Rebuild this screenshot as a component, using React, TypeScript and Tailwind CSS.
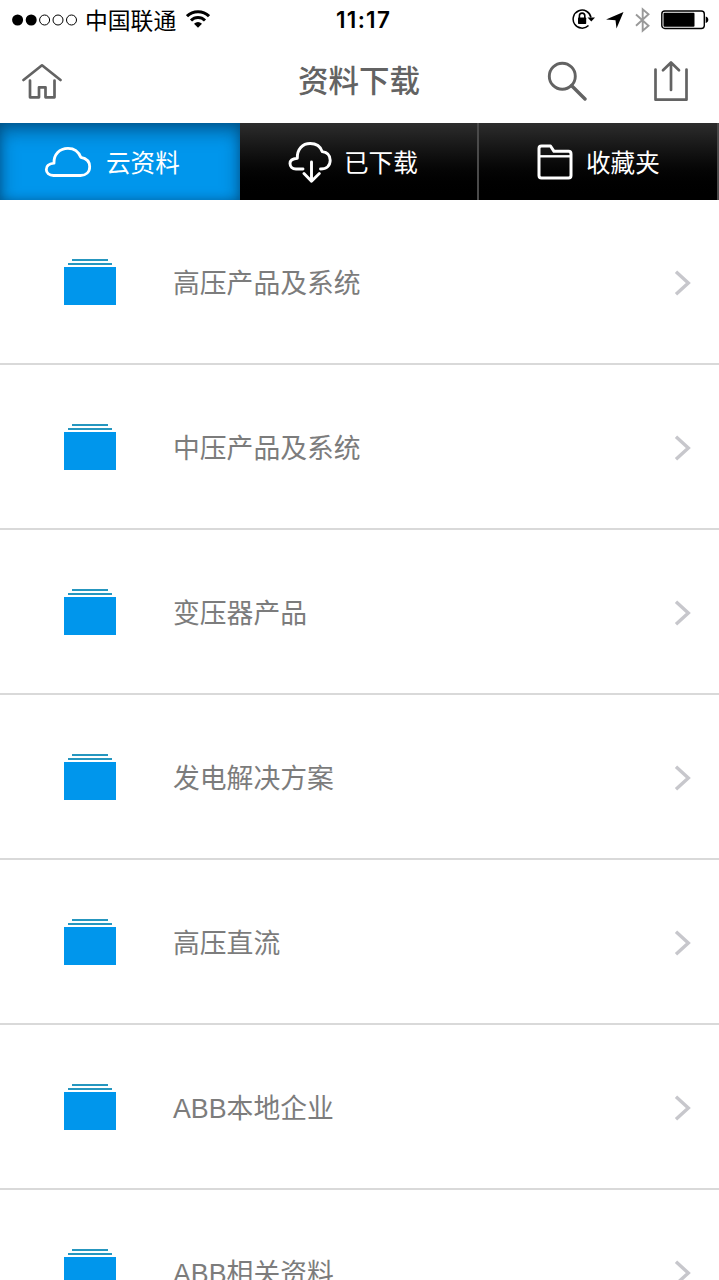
import type { ReactNode } from 'react';

interface Tab {
  label: string;
  icon: ReactNode;
  className: string;
}

const categories: string[] = [
  '高压产品及系统',
  '中压产品及系统',
  '变压器产品',
  '发电解决方案',
  '高压直流',
  'ABB本地企业',
  'ABB相关资料',
];

const tabs: Tab[] = [
  {
    label: '云资料',
    icon: <CloudIcon />,
    className:
      'w-[240px] pl-[44px] gap-[14px] bg-[#0096ec] shadow-[inset_0_8px_18px_rgba(0,40,70,0.5),inset_0_0_10px_rgba(0,50,90,0.35)]',
  },
  {
    label: '已下载',
    icon: <CloudDownloadIcon />,
    className:
      'w-[239px] pl-[48px] gap-[12px] bg-linear-to-b from-[#2d2d2d] to-black border-r-2 border-[#4a4a4a]',
  },
  {
    label: '收藏夹',
    icon: <FolderIcon />,
    className:
      'w-[240px] pl-[58px] gap-[13px] bg-linear-to-b from-[#2d2d2d] to-black border-r-2 border-[#4a4a4a]',
  },
];

function CloudIcon() {
  return (
    <svg width="48" height="32" viewBox="0 0 48 32" fill="none" stroke="white" strokeWidth="2.8" strokeLinejoin="round">
      <path d="M9.5 29.5C5 29.5 2.3 27 2.3 23.5C2.3 20 5 17.8 10 17.2C9.6 8.5 15.5 2.3 24 2.3C30.5 2.3 34.8 6 36.8 11.3C42.5 12.3 45.7 16 45.7 20.7C45.7 26 42 29.5 36.5 29.5Z" />
    </svg>
  );
}

function CloudDownloadIcon() {
  return (
    <svg width="44" height="42" viewBox="0 0 44 42" fill="none" stroke="white" strokeWidth="2.9" strokeLinecap="round" strokeLinejoin="round">
      <path d="M15 28H8C4.3 28 2 25.5 2 22.5C2 19.5 4.5 17.5 9.3 17.2C9 8 14.5 2.5 22.2 2.5C28.5 2.5 32.5 5.5 34.2 10.6C39.5 11.3 42.2 14.7 42.2 19.2C42.2 24.5 38.500 28 32.5 28" />
      <path d="M23.5 21V40M16 32.5L23.5 40.2L31.3 32.5" />
    </svg>
  );
}

function FolderIcon() {
  return (
    <svg width="36" height="36" viewBox="0 0 36 36" fill="none" stroke="white" strokeWidth="3" strokeLinejoin="round">
      <path d="M2 31.5V4.5Q2 2 4.5 2H13.5L17 7.3H31.5Q34 7.3 34 10V31.5Q34 34 31.5 34H4.5Q2 34 2 31.5Z" />
      <path d="M2 12.3H34" strokeWidth="2.4" />
    </svg>
  );
}

function StatusBar() {
  return (
    <div className="flex h-10 shrink-0 items-center text-black">
      <svg className="ml-3" width="66" height="12" viewBox="0 0 66 12" fill="none" stroke="black">
        <circle cx="5.6" cy="6" r="5.5" fill="black" stroke="none" />
        <circle cx="19.2" cy="6" r="5.5" fill="black" stroke="none" />
        <circle cx="32.6" cy="6" r="5" />
        <circle cx="46" cy="6" r="5" />
        <circle cx="59.5" cy="6" r="5" />
      </svg>
      <span className="ml-[7px] w-[94px] whitespace-nowrap pt-px text-[22.8px] leading-10">中国联通</span>
      <svg className="-mt-0.5 ml-[7px]" width="24" height="18" viewBox="0 0 24 18" fill="none" stroke="black" strokeWidth="3">
        <path d="M1 6.2C7 0.3 17 0.3 23 6.2" />
        <path d="M5 10.5C9 6.6 15 6.6 19 10.5" />
        <path d="M8 13.7Q12 10.5 16 13.7L12 17.7Z" fill="black" stroke="none" />
      </svg>
      <span className="ml-[126px] w-[56px] whitespace-nowrap font-['Inter',sans-serif] text-[22.5px] font-semibold tracking-[1.3px]">11:17</span>
      <svg className="-mt-0.5 ml-[180px]" width="23" height="20" viewBox="0 0 23 20" fill="none" stroke="black" strokeWidth="1.5">
        <path d="M19 8.5A9 9 0 1 0 16.5 16.5" />
        <path d="M15.5 8.5H23L19.3 12.5Z" fill="black" stroke="none" />
        <path d="M7.4 9V6.8A2.7 2.7 0 0 1 12.8 6.8V9" strokeWidth="1.6" />
        <rect x="6" y="8.5" width="8.2" height="6.5" rx="0.7" fill="black" stroke="none" />
      </svg>
      <svg className="ml-[11px]" width="18" height="17" viewBox="0 0 18 17">
        <path d="M17.5 0L10.5 16.5L9.5 8.3L0 7.5Z" />
      </svg>
      <svg className="ml-[11px]" width="15" height="26" viewBox="0 0 15 26" fill="none" stroke="#999999" strokeWidth="1.9">
        <path d="M1 7.5L13.5 18.7L7.7 23.7V2.3L13.5 7.3L1 18.7" />
      </svg>
      <svg className="ml-[11px]" width="48" height="20" viewBox="0 0 48 20">
        <rect x="0.8" y="1" width="42.5" height="17.5" rx="3" fill="none" stroke="black" strokeWidth="1.4" />
        <rect x="2.5" y="2.8" width="31" height="14" rx="1" />
        <path d="M44.7 6.5C48.2 7.5 48.2 12 44.7 13Z" />
      </svg>
    </div>
  );
}

function NavBar() {
  return (
    <div className="flex h-[83px] shrink-0 items-center pb-px text-[#636363]">
      <svg className="ml-[22px]" width="40" height="36" viewBox="0 0 40 36" fill="none" stroke="currentColor" strokeWidth="2.7" strokeLinecap="round" strokeLinejoin="round">
        <path d="M1.5 17L20 2.3L38.5 17" />
        <path d="M8 17.5V34.3H17V24.3H23.5V34.3H32.5V17.5" />
      </svg>
      <h1 className="ml-[236px] w-[124px] whitespace-nowrap pt-px text-[30.5px] font-medium leading-none">资料下载</h1>
      <svg className="ml-[125px]" width="40" height="40" viewBox="0 0 40 40" fill="none" stroke="currentColor" strokeWidth="2.9" strokeLinecap="round">
        <circle cx="15.3" cy="15.2" r="13" />
        <path d="M24.7 24.7L38 38" strokeWidth="3.4" />
      </svg>
      <svg className="ml-[66px]" width="36" height="42" viewBox="0 0 36 42" fill="none" stroke="currentColor" strokeWidth="2.7" strokeLinejoin="round" strokeLinecap="round">
        <path d="M2.5 9.5V39.7H33.5V9.5" />
        <path d="M18 30V2.5M10 10.3L18 2.5L26 10.3" />
      </svg>
    </div>
  );
}

function CategoryRow({ label }: { label: string }) {
  return (
    <li className="flex h-[165px] items-center border-b-2 border-[#d9d9d9] pl-16 pr-7">
      <div className="flex w-[52px] flex-col items-center">
        <div className="h-0.5 w-9 bg-[#2596bf]" />
        <div className="mt-0.5 h-0.5 w-11 bg-[#2596bf]" />
        <div className="mt-0.5 h-[38px] w-full bg-[#0096ec]" />
      </div>
      <span className="ml-[57px] whitespace-nowrap pt-[5px] text-[26.8px] leading-none text-[#7c7c7c]">{label}</span>
      <svg className="ml-auto mt-[3px]" width="17" height="26" viewBox="0 0 17 26" fill="none" stroke="#c7c7cc" strokeWidth="3.4">
        <path d="M2 1.8L14.3 13L2 24.2" />
      </svg>
    </li>
  );
}

export default function App() {
  return (
    <main className="flex h-[1280px] w-[719px] flex-col overflow-hidden bg-white font-['Liberation_Sans','Noto_Sans_CJK_SC',sans-serif]">
      <StatusBar />
      <NavBar />
      <nav className="flex h-[77px] shrink-0">
        {tabs.map((tab) => (
          <div key={tab.label} className={`flex h-full items-center ${tab.className}`}>
            {tab.icon}
            <span className="whitespace-nowrap pt-[5px] text-[24.6px] leading-none text-white">{tab.label}</span>
          </div>
        ))}
      </nav>
      <ul>
        {categories.map((label) => (
          <CategoryRow key={label} label={label} />
        ))}
      </ul>
    </main>
  );
}
